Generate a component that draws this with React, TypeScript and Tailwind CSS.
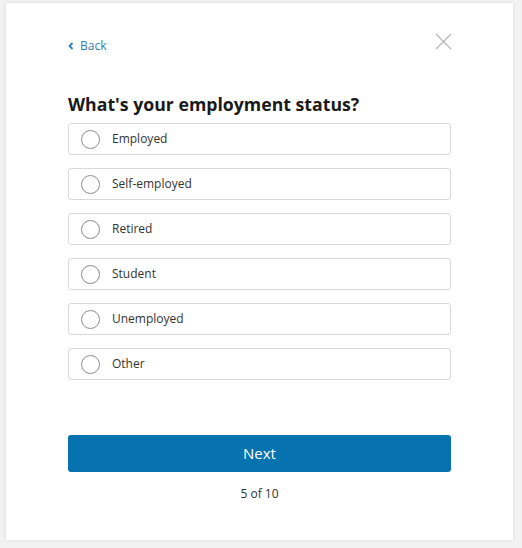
const options = ["Employed", "Self-employed", "Retired", "Student", "Unemployed", "Other"]

export default function App() {
  return (
    <div className="w-[522px] h-[548px] bg-[#f2f2f2] pt-[3px] pl-[6px] font-['Open_Sans',sans-serif]">
      <div className="w-[507px] h-[537px] bg-white shadow-[0_0_3px_rgba(0,0,0,0.12)] px-[62px] pt-[31px] flex flex-col">
        <div className="h-6 flex items-center justify-between">
          <button className="flex items-center gap-[6px] text-[12px] text-[#2f7db5]">
            <svg width="6" height="8" viewBox="0 0 6 8">
              <path d="M4.5 1 L1.5 4 L4.5 7" fill="none" stroke="#2f7db5" strokeWidth="1.8" />
            </svg>
            Back
          </button>
          <svg className="-mt-[10px] -mr-[1px]" width="17" height="17" viewBox="0 0 17 17">
            <path d="M1 1 L16 16 M16 1 L1 16" stroke="#b5b5b5" strokeWidth="1.2" />
          </svg>
        </div>
        <h1 className="mt-[32px] text-[17.7px] leading-[28px] font-bold text-[#1a1a1a]">What's your employment status?</h1>
        <div className="mt-[5px] flex flex-col gap-[13px]">
          {options.map((o) => (
            <label key={o} className="h-[32px] border border-[#d9d9d9] rounded-[3px] flex items-center pl-[12px] gap-[12px] text-[12px] text-[#333]">
              <span className="w-[19px] h-[19px] rounded-full border border-[#8c8c8c]" />
              {o}
            </label>
          ))}
        </div>
        <button className="mt-[55px] h-[37px] w-full rounded-[3px] bg-[#0672b0] text-white text-[15px]">Next</button>
        <div className="mt-[12px] text-center text-[12px] leading-5 text-[#333]">5 of 10</div>
      </div>
    </div>
  )
}
